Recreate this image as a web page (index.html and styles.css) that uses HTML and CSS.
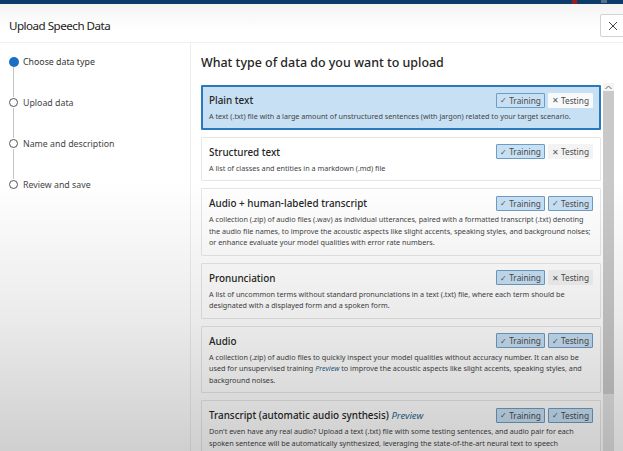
FILE: index.html
```html
<!DOCTYPE html>
<html lang="en">
<head>
<meta charset="utf-8">
<title>Upload Speech Data</title>
<link rel="stylesheet" href="styles.css">
</head>
<body>
<div class="app">
  <div class="topbar"><span class="topbar-mark"></span><span class="topbar-icon"></span></div>
  <header class="header">
    <h1 class="header-title">Upload Speech Data</h1>
    <button class="close-btn" aria-label="Close">
      <svg width="10" height="10" viewBox="0 0 10 10"><path d="M1 1L9 9M9 1L1 9" stroke="#444" stroke-width="1"/></svg>
    </button>
  </header>
  <div class="body">
    <nav class="steps">
      <div class="step step-active"><span class="dot dot-filled"></span><span class="step-label">Choose data type</span></div>
      <div class="connector"></div>
      <div class="step"><span class="dot"></span><span class="step-label">Upload data</span></div>
      <div class="connector"></div>
      <div class="step"><span class="dot"></span><span class="step-label">Name and description</span></div>
      <div class="connector"></div>
      <div class="step"><span class="dot"></span><span class="step-label">Review and save</span></div>
    </nav>
    <main class="panel">
      <h2 class="panel-title">What type of data do you want to upload</h2>
      <div class="scroll-row">
        <div class="cards">
          <div class="card card-selected">
            <div class="card-head">
              <span class="card-title">Plain text</span>
              <span class="badges"><span class="badge badge-on"><span class="mark">✓</span>Training</span><span class="badge badge-off"><span class="mark">✕</span>Testing</span></span>
            </div>
            <p class="card-desc">A text (.txt) file with a large amount of unstructured sentences (with jargon) related to your target scenario.</p>
          </div>
          <div class="card">
            <div class="card-head">
              <span class="card-title">Structured text</span>
              <span class="badges"><span class="badge badge-on"><span class="mark">✓</span>Training</span><span class="badge badge-off"><span class="mark">✕</span>Testing</span></span>
            </div>
            <p class="card-desc">A list of classes and entities in a markdown (.md) file</p>
          </div>
          <div class="card">
            <div class="card-head">
              <span class="card-title">Audio + human-labeled transcript</span>
              <span class="badges"><span class="badge badge-on"><span class="mark">✓</span>Training</span><span class="badge badge-on"><span class="mark">✓</span>Testing</span></span>
            </div>
            <p class="card-desc">A collection (.zip) of audio files (.wav) as individual utterances, paired with a formatted transcript (.txt) denoting the audio file names, to improve the acoustic aspects like slight accents, speaking styles, and background noises; or enhance evaluate your model qualities with error rate numbers.</p>
          </div>
          <div class="card">
            <div class="card-head">
              <span class="card-title">Pronunciation</span>
              <span class="badges"><span class="badge badge-on"><span class="mark">✓</span>Training</span><span class="badge badge-off"><span class="mark">✕</span>Testing</span></span>
            </div>
            <p class="card-desc">A list of uncommon terms without standard pronunciations in a text (.txt) file, where each term should be designated with a displayed form and a spoken form.</p>
          </div>
          <div class="card">
            <div class="card-head">
              <span class="card-title">Audio</span>
              <span class="badges"><span class="badge badge-on"><span class="mark">✓</span>Training</span><span class="badge badge-on"><span class="mark">✓</span>Testing</span></span>
            </div>
            <p class="card-desc">A collection (.zip) of audio files to quickly inspect your model qualities without accuracy number. It can also be used for unsupervised training <i class="preview">Preview</i> to improve the acoustic aspects like slight accents, speaking styles, and background noises.</p>
          </div>
          <div class="card">
            <div class="card-head">
              <span class="card-title">Transcript (automatic audio synthesis) <i class="preview preview-title">Preview</i></span>
              <span class="badges"><span class="badge badge-on"><span class="mark">✓</span>Training</span><span class="badge badge-on"><span class="mark">✓</span>Testing</span></span>
            </div>
            <p class="card-desc">Don't even have any real audio? Upload a text (.txt) file with some testing sentences, and audio pair for each spoken sentence will be automatically synthesized, leveraging the state-of-the-art neural text to speech technology.</p>
          </div>
        </div>
        <div class="scrollbar">
          <span class="scroll-arrow"><svg width="7" height="5" viewBox="0 0 7 5"><path d="M0.5 4L3.5 1L6.5 4" fill="none" stroke="#666" stroke-width="1"/></svg></span>
          <span class="scroll-thumb"></span>
        </div>
      </div>
    </main>
  </div>
  <div class="fade"></div>
</div>
</body>
</html>
```

FILE: styles.css
```css
* { box-sizing: border-box; }
html, body { margin: 0; padding: 0; }
body {
  width: 623px;
  height: 451px;
  overflow: hidden;
  background: #fff;
  font-family: "Noto Sans", "Open Sans", sans-serif;
  color: #323130;
}
.app {
  position: relative;
  width: 623px;
  height: 451px;
  overflow: hidden;
  display: flex;
  flex-direction: column;
}
.topbar {
  height: 4px;
  background: #0b3b6b;
  flex: none;
  display: flex;
  justify-content: flex-end;
  align-items: flex-start;
}
.topbar-mark { width: 5px; height: 4px; background: #9a1c1c; margin-right: 24px; }
.topbar-icon { width: 6px; height: 3px; background: #5a6f86; margin-right: 16px; }
.header {
  height: 39px;
  flex: none;
  display: flex;
  align-items: center;
  justify-content: space-between;
  border-bottom: 1px solid #efefef;
  background: linear-gradient(#f4f4f4, #fff 70%);
  padding: 5px 0 0 9px;
}
.header-title {
  margin: 0;
  font-size: 11.6px;
  font-weight: 400;
  color: #222;
  letter-spacing: -0.5px;
}
.close-btn {
  width: 25px;
  height: 23px;
  margin-right: -2px;
  border: 1px solid #d2d2d2;
  border-radius: 2px;
  background: #fff;
  display: flex;
  align-items: center;
  justify-content: center;
  padding: 0;
}
.body {
  flex: 1;
  display: flex;
  min-height: 0;
}
.steps {
  width: 191px;
  flex: none;
  border-right: 1px solid #ededed;
  padding: 13px 0 0 9px;
  display: flex;
  flex-direction: column;
}
.step {
  display: flex;
  align-items: center;
  height: 11px;
  gap: 5px;
}
.dot {
  width: 9px;
  height: 9px;
  border-radius: 50%;
  border: 1px solid #555;
  background: #fff;
  flex: none;
}
.dot-filled {
  width: 10px;
  height: 10px;
  margin-left: -0.5px;
  margin-right: -0.5px;
  border: none;
  background: #1a6fc4;
}
.step-label {
  font-size: 8.8px;
  color: #444;
  white-space: nowrap;
}
.step-active .step-label { color: #333; }
.connector {
  width: 1px;
  height: 30px;
  margin-left: 4px;
  background: #c4c4c4;
}
.panel {
  flex: 1;
  display: flex;
  flex-direction: column;
  padding-left: 10px;
  min-width: 0;
}
.panel-title {
  margin: 11px 0 0;
  font-size: 12.45px;
  font-weight: 500;
  color: #252525;
  line-height: 18px;
  height: 29px;
}
.scroll-row {
  flex: 1;
  display: flex;
  gap: 2px;
  min-height: 0;
}
.cards {
  width: 400px;
  flex: none;
  display: flex;
  flex-direction: column;
  gap: 7px;
  padding-top: 2px;
}
.card {
  border: 1px solid #e6e6e6;
  background: #fff;
  padding: 6px 7px 6px 7px;
  border-radius: 1px;
}
.card-selected {
  border: 2px solid #2a78bd;
  background: #c7e0f4;
  padding: 5px 6px 5px 6px;
}
.card-head {
  display: flex;
  align-items: center;
  justify-content: space-between;
  height: 16px;
}
.card-title {
  font-size: 9.9px;
  font-weight: 500;
  color: #252525;
  white-space: nowrap;
}
.preview {
  color: #1f6b8c;
  font-style: italic;
  font-weight: 400;
}
.preview-title { font-size: 9.5px; }
.badges {
  display: flex;
  gap: 3px;
}
.badge {
  height: 15px;
  display: flex;
  align-items: center;
  padding: 0 3px;
  font-size: 8.3px;
  color: #4a4a4a;
  white-space: nowrap;
  border-radius: 1px;
}
.mark {
  font-size: 7.5px;
  margin-right: 2px;
  color: #555;
}
.badge-on {
  background: #c7e0f4;
  border: 1px solid #6f9cc4;
}
.badge-off {
  background: #f3f3f3;
  border: 1px solid transparent;
}
.card-selected .badge-off { background: #f7f9fb; }
.card-desc {
  margin: 3px 0 0;
  font-size: 7.22px;
  line-height: 11.5px;
  color: #444;
}
.card-desc .preview { color: #1f5f8c; }
.scrollbar {
  width: 11px;
  flex: none;
  display: flex;
  flex-direction: column;
  background: #e2e2e2;
}
.scroll-arrow {
  height: 8px;
  display: flex;
  align-items: center;
  justify-content: center;
  background: #f4f4f4;
}
.scroll-thumb {
  height: 303px;
  background: #c9c9c9;
}
.fade {
  position: absolute;
  inset: 0;
  pointer-events: none;
  background: linear-gradient(to bottom, rgba(0,0,0,0) 0%, rgba(0,0,0,0) 40%, rgba(0,0,0,0.08) 70%, rgba(0,0,0,0.19) 100%);
}
```
